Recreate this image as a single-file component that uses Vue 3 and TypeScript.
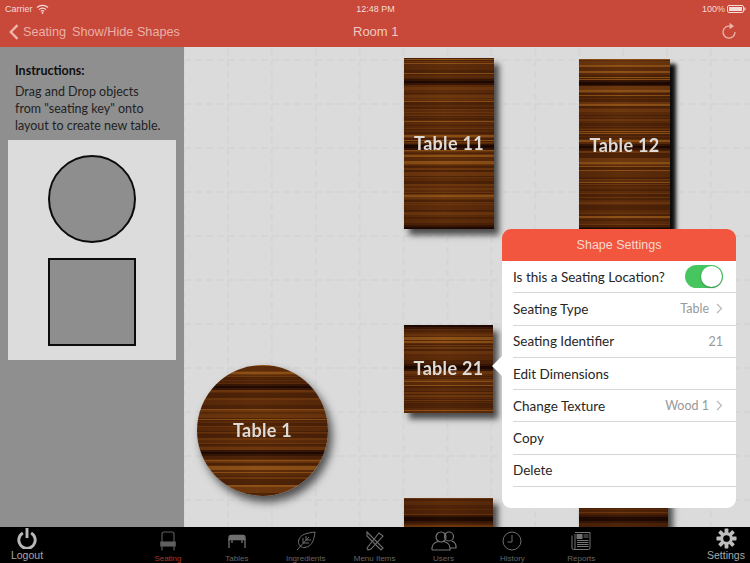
<script setup lang="ts">
interface Wood { id: string; label: string; x: number; y: number; w: number; h: number; round?: boolean; bands: number[]; seed: number; strong?: boolean; tight?: boolean }

function woodGradient(h: number, bands: number[], seed: number): string {
  let s = seed;
  const rnd = () => { s = (s * 16807) % 2147483647; return s / 2147483647; };
  const stops: string[] = [];
  let y = 0;
  while (y < h) {
    const t = 1 + Math.floor(rnd() * 1.8);
    const r = rnd();
    let c = r < 0.35 ? '#4c2208' : r < 0.68 ? '#5c2b0a' : r < 0.9 ? '#6d370e' : '#8f5217';
    const mid = y + t / 2;
    for (const b of bands) {
      const d = Math.abs(mid - b);
      if (d < 1.6) c = '#1b0702';
      else if (d < 3.2) c = '#361505';
    }
    stops.push(`${c} ${y}px ${y + t}px`);
    y += t;
  }
  return `linear-gradient(to right, rgba(30,10,0,.12), rgba(130,70,10,.06) 45%, rgba(30,10,0,.1)), linear-gradient(to bottom, ${stops.join(',')})`;
}

const woods: Wood[] = [
  { id: 't11', label: 'Table 11', x: 220, y: 11, w: 90, h: 171, bands: [24, 89, 170], seed: 1234 },
  { id: 't12', label: 'Table 12', x: 395, y: 12, w: 91, h: 172, bands: [24, 88, 171], seed: 4242, strong: true },
  { id: 't21', label: 'Table 21', x: 220, y: 278, w: 89, h: 88, bands: [1, 43], seed: 777, tight: true },
  { id: 't1', label: 'Table 1', x: 13, y: 318, w: 131, h: 131, round: true, bands: [22, 88], seed: 9191 },
  { id: 'b1', label: '', x: 220, y: 451, w: 89, h: 90, bands: [21], seed: 3131 },
  { id: 'b2', label: '', x: 395, y: 451, w: 89, h: 90, bands: [21], seed: 5353 },
];

const woodStyle = (t: Wood) => ({
  left: `${t.x}px`, top: `${t.y}px`, width: `${t.w}px`, height: `${t.h}px`,
  backgroundImage: woodGradient(t.h, t.bands, t.seed),
});

const rows = [
  { label: 'Seating Type', value: 'Table', chevron: true },
  { label: 'Seating Identifier', value: '21', chevron: false },
  { label: 'Edit Dimensions', value: '', chevron: false },
  { label: 'Change Texture', value: 'Wood 1', chevron: true },
  { label: 'Copy', value: '', chevron: false },
  { label: 'Delete', value: '', chevron: false },
];
const gearTeeth = [0, 45, 90, 135];
</script>

<template>
  <div class="app">
    <header class="top">
      <div class="status">
        <div class="st-left">
          <span>Carrier</span>
          <svg width="13" height="10" viewBox="0 0 13 10"><path d="M1 3.500a8 8 0 0 1 11 0M3 5.600a5 5 0 0 1 7 0M4.900 7.400a2.400 2.400 0 0 1 3.200 0" fill="none" stroke="#f3dcd8" stroke-width="1.200"/><circle cx="6.500" cy="8.900" r="0.900" fill="#f3dcd8"/></svg>
        </div>
        <span class="st-time">12:48 PM</span>
        <div class="st-right">
          <span>100%</span>
          <svg width="19" height="8" viewBox="0 0 19 8"><rect x="0.500" y="0.500" width="16" height="7" rx="1.500" fill="none" stroke="#f3dcd8"/><rect x="2" y="2" width="13" height="4" fill="#f3dcd8"/><rect x="17.300" y="2.500" width="1.200" height="3" fill="#f3dcd8"/></svg>
        </div>
      </div>
      <div class="nav">
        <div class="nav-left">
          <svg class="back" width="10" height="16" viewBox="0 0 10 16"><path d="M8.500 1.200 1.800 8l6.700 6.800" fill="none" stroke="#eeb5ad" stroke-width="2.400"/></svg>
          <span>Seating</span>
          <span class="nav-second">Show/Hide Shapes</span>
        </div>
        <span class="nav-title">Room 1</span>
        <svg class="refresh" width="16" height="18" viewBox="0 0 16 18"><path d="M9.600 4.300A6 6 0 1 0 14 10" fill="none" stroke="#e9b5ad" stroke-width="1.300"/><path d="M8.600 0.800 13 4.200 8.600 7.200z" fill="#e9b5ad"/></svg>
      </div>
    </header>

    <main class="main">
      <aside class="side">
        <h2 class="side-title">Instructions:</h2>
        <p class="side-text">Drag and Drop objects from "seating key" onto layout to create new table.</p>
        <div class="key">
          <div class="key-shape key-circle"></div>
          <div class="key-shape"></div>
        </div>
      </aside>

      <section class="canvas">
        <svg class="grid" width="566" height="480">
          <defs>
            <pattern id="gridcell" x="22" y="-9" width="43.900" height="44" patternUnits="userSpaceOnUse">
              <path d="M22 0V44" stroke="#cfcfcf" stroke-width="1" stroke-dasharray="7 4"/>
              <path d="M0 22H44" stroke="#cfcfcf" stroke-width="1" stroke-dasharray="7 4"/>
            </pattern>
          </defs>
          <rect width="566" height="480" fill="url(#gridcell)"/>
        </svg>

        <div
          v-for="t in woods"
          :key="t.id"
          class="wood"
          :class="{ round: t.round, strong: t.strong, tight: t.tight }"
          :style="woodStyle(t)"
        >{{ t.label }}</div>

        <div class="pop">
          <span class="pop-arrow"></span>
          <div class="pop-head">Shape Settings</div>
          <div class="pop-row">
            <span>Is this a Seating Location?</span>
            <span class="toggle"><span class="knob"></span></span>
          </div>
          <div v-for="r in rows" :key="r.label" class="pop-row">
            <span>{{ r.label }}</span>
            <span class="val">
              {{ r.value }}
              <svg v-if="r.chevron" width="7" height="11" viewBox="0 0 7 11"><path d="M1 1l4.500 4.500L1 10" fill="none" stroke="#b5b5b5" stroke-width="1.100"/></svg>
            </span>
          </div>
        </div>
      </section>
    </main>

    <footer class="tabbar">
      <div class="side-btn side-btn-left">
        <svg width="24" height="21" viewBox="0 0 24 23"><path d="M7.500 5.500a9 9 0 1 0 9 0" fill="none" stroke="#b8b8b8" stroke-width="3.200"/><path d="M12 0v11" stroke="#b8b8b8" stroke-width="3.200"/></svg>
        <span>Logout</span>
      </div>
      <div class="tabs">
        <div class="tab active">
          <svg width="20" height="20" viewBox="0 0 20 20" fill="none" stroke="#5f5f5f" stroke-width="1.100"><path d="M4 12V3q0-2 2-2h8q2 0 2 2v9"/><rect x="2.800" y="11" width="14.400" height="4" fill="#5f5f5f"/><path d="M4 15v4.400M16 15v4.400"/></svg>
          <span>Seating</span>
        </div>
        <div class="tab">
          <svg width="20" height="20" viewBox="0 0 20 20" fill="none" stroke="#6f6f6f" stroke-width="1.300"><path d="M2 6.500q0-2 2-2h12q2 0 2 2v2H2z" fill="#6f6f6f"/><path d="M2 8v9M18 8v9M5 8v4M15 8v4"/></svg>
          <span>Tables</span>
        </div>
        <div class="tab">
          <svg width="20" height="20" viewBox="0 0 20 20" fill="none" stroke="#6f6f6f" stroke-width="1"><path d="M19 1C12 2 3.500 3 2.500 10c-.5 4 3 7 6.500 6.500C17 15 18 8 19 1z"/><path d="M1 19 13 6M7 12V7M7 12h6M10 9V5M10 9h5"/></svg>
          <span>Ingredients</span>
        </div>
        <div class="tab">
          <svg width="20" height="20" viewBox="0 0 20 20" fill="none" stroke="#6f6f6f" stroke-width="1.100"><path d="M2 1 18 17l-2 2L6 9 2 5z"/><path d="M14 2 18 5 6 18l-3 1-1-2z"/></svg>
          <span>Menu Items</span>
        </div>
        <div class="tab">
          <svg width="26" height="20" viewBox="0 0 26 20" fill="none" stroke="#757575" stroke-width="1.200"><circle cx="10" cy="6" r="5"/><circle cx="18" cy="5.500" r="4.500"/><path d="M1 19v-2c0-4 4-6 6-6.500M13 10.500c2 .5 6 2.500 6 6.500v2H1"/><path d="M20.500 10c2 .5 4.500 2 4.500 5.500V17h-6"/></svg>
          <span>Users</span>
        </div>
        <div class="tab">
          <svg width="20" height="20" viewBox="0 0 20 20" fill="none" stroke="#6f6f6f" stroke-width="1"><circle cx="10" cy="10" r="9"/><path d="M10 4v7H5.500"/></svg>
          <span>History</span>
        </div>
        <div class="tab">
          <svg width="20" height="20" viewBox="0 0 20 20" fill="none" stroke="#757575" stroke-width="1"><path d="M4 1.500h15V17a1.500 1.500 0 0 1-1.500 1.500H3"/><path d="M4 3v14a1.500 1.500 0 0 1-3 0V4.500"/><rect x="6" y="3.500" width="5" height="4" fill="#757575"/><path d="M12.500 4h5M12.500 6h5M6 9.500h11.500M6 11.500h11.500M6 13.500h11.500M6 15.500h11.500"/></svg>
          <span>Reports</span>
        </div>
      </div>
      <div class="side-btn side-btn-right">
        <svg width="21" height="21" viewBox="0 0 22 22">
          <g fill="#bdbdbd">
            <rect v-for="a in gearTeeth" :key="a" x="9" y="0.500" width="4" height="21" rx="0.800" :transform="`rotate(${a} 11 11)`"/>
          </g>
          <circle cx="11" cy="11" r="6.500" fill="#bdbdbd"/>
          <circle cx="11" cy="11" r="3.500" fill="#000"/>
        </svg>
        <span>Settings</span>
      </div>
    </footer>
  </div>
</template>

<style scoped>
.app {
  width: 750px;
  height: 563px;
  display: flex;
  flex-direction: column;
  overflow: hidden;
  font-family: "Lato", "Open Sans", sans-serif;
}
.top {
  height: 47px;
  background: #c8483a;
  display: flex;
  flex-direction: column;
  flex: none;
  font-family: "Liberation Sans", Arial, sans-serif;
}
.status {
  height: 17px;
  padding: 0 4px 0 5px;
  display: grid;
  grid-template-columns: 1fr auto 1fr;
  align-items: center;
  font-size: 9px;
  color: #f3dcd8;
}
.st-left { display: flex; align-items: center; gap: 3px; }
.st-right { display: flex; align-items: center; justify-content: flex-end; gap: 2px; }
.nav {
  flex: 1;
  position: relative;
  display: flex;
  align-items: center;
  padding: 0 0 0 9px;
  font-size: 12.700px;
}
.nav-left { display: flex; align-items: center; color: #eab0a7; }
.back { margin-right: 4px; }
.nav-second { margin-left: 6px; }
.nav-title {
  position: absolute;
  left: 353px;
  top: 7px;
  font-size: 13px;
  color: #f0c8c1;
}
.refresh { position: absolute; right: 13px; top: 5px; }
.main { flex: 1; min-height: 0; display: flex; }
.side {
  width: 184px;
  flex: none;
  background: #8f8f8f;
  padding-top: 15px;
  box-sizing: border-box;
}
.side-title {
  margin: 0 0 4px 15px;
  font-size: 12.500px;
  line-height: 17px;
  font-weight: 700;
  color: #0f0f0f;
}
.side-text {
  margin: 0 0 6px 15px;
  width: 148px;
  font-size: 12.500px;
  line-height: 17px;
  color: #222;
}
.key {
  margin-left: 8px;
  width: 168px;
  height: 220px;
  background: #dcdcdc;
  display: flex;
  flex-direction: column;
  align-items: center;
  gap: 15px;
  padding-top: 15px;
  box-sizing: border-box;
}
.key-shape {
  width: 88px;
  height: 88px;
  box-sizing: border-box;
  background: #8e8e8e;
  border: 2px solid #0c0c0c;
}
.key-circle { border-radius: 50%; }
.canvas {
  flex: 1;
  position: relative;
  background: #dbdbdb;
  overflow: hidden;
}
.grid { position: absolute; left: 0; top: 0; }
.wood {
  position: absolute;
  display: flex;
  align-items: center;
  justify-content: center;
  padding-bottom: 1px;
  box-sizing: border-box;
  color: #dfdcd8;
  font-size: 18px;
  font-weight: 700;
  letter-spacing: 0.3px;
  filter: blur(0.25px);
  box-shadow: 5px 6px 6px rgba(20, 20, 20, 0.72);
}
.wood.tight { padding-bottom: 3px; }
.wood.strong { box-shadow: 6px 5px 4px rgba(0, 0, 0, 0.95); }
.wood.round {
  border-radius: 50%;
  box-shadow: 4px 6px 8px rgba(20, 20, 20, 0.7);
}
.pop {
  position: absolute;
  left: 318px;
  top: 182px;
  width: 234px;
  height: 279px;
  background: #fff;
  border-radius: 9px;
}
.pop-arrow {
  position: absolute;
  left: -10px;
  top: 127px;
  width: 0;
  height: 0;
  border-top: 10px solid transparent;
  border-bottom: 10px solid transparent;
  border-right: 10px solid #fff;
}
.pop-head {
  height: 32px;
  background: #f2563f;
  border-radius: 9px 9px 0 0;
  color: #f7d8d0;
  font: 12.500px/32px "Liberation Sans", Arial, sans-serif;
  text-align: center;
}
.pop-row {
  height: 32.300px;
  margin-left: 11px;
  padding-right: 13px;
  box-sizing: border-box;
  display: flex;
  align-items: center;
  justify-content: space-between;
  border-bottom: 1px solid #d6d6d6;
  font-size: 13.500px;
  color: #262626;
}
.val {
  display: flex;
  align-items: center;
  gap: 7px;
  font-size: 12.500px;
  color: #999;
}
.toggle {
  width: 38px;
  height: 23px;
  border-radius: 12px;
  background: #47c55f;
  display: flex;
  justify-content: flex-end;
  align-items: center;
  padding-right: 1px;
  box-sizing: border-box;
}
.knob {
  width: 21px;
  height: 21px;
  border-radius: 50%;
  background: #fff;
  box-shadow: 0 1px 2px rgba(0, 0, 0, 0.3);
}
.tabbar {
  height: 36px;
  flex: none;
  background: #000;
  display: flex;
  align-items: stretch;
  font-family: "Liberation Sans", Arial, sans-serif;
}
.side-btn {
  display: flex;
  flex-direction: column;
  align-items: center;
  color: #a8a8a8;
  font-size: 10.500px;
  line-height: 12px;
  padding-top: 1px;
  width: 54px;
  flex: none;
}
.side-btn-right { margin-left: auto; width: 48px; }
.tabs {
  display: flex;
  margin-left: 79.500px;
}
.tab {
  width: 68.900px;
  display: flex;
  flex-direction: column;
  align-items: center;
  padding-top: 4px;
  font-size: 8px;
  line-height: 9px;
  color: #666;
}
.tab svg { margin-bottom: 3px; }
.tab.active { color: #a63a2e; }
</style>
